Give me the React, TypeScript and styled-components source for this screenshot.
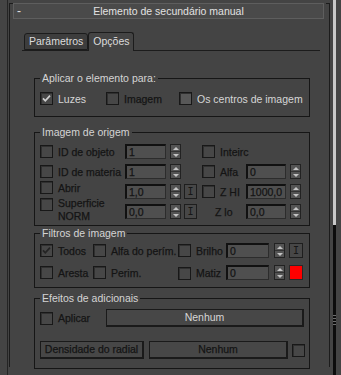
import React from "react";
import styled, { createGlobalStyle } from "styled-components";

const GlobalStyle = createGlobalStyle`
  html, body {
    margin: 0;
    padding: 0;
    background: #444444;
  }
  body {
    font-family: "Liberation Sans", Arial, sans-serif;
    font-size: 10.5px;
  }
`;

const Page = styled.div`
  display: flex;
  width: 341px;
  height: 375px;
  overflow: hidden;
  padding-left: 7px;
  box-sizing: border-box;
  background: #444444;
`;

const Panel = styled.div`
  flex: none;
  width: 326px;
  padding-top: 11px;
  border-left: 1px solid #242424;
  box-sizing: border-box;
`;

const Rollout = styled.div`
  position: relative;
  width: 321px;
  height: 100%;
  margin-left: 1px;
  border-left: 1px solid #1c1c1c;
  border-right: 1px solid #1c1c1c;
  box-sizing: border-box;

  &::before,
  &::after {
    content: "";
    position: absolute;
    top: 0;
    width: 4px;
    height: 1px;
    background: #1c1c1c;
  }
  &::before {
    left: -1px;
  }
  &::after {
    right: -1px;
  }
`;

const Header = styled.div`
  display: grid;
  grid-template-columns: 12px 1fr 12px;
  align-items: center;
  width: 311px;
  height: 16px;
  margin: -8px 0 0 3px;
  border: 1px solid #5e5e5e;
  background: #4a4a4a;
  box-sizing: border-box;
  color: #e2e2e2;
  line-height: 14px;
`;

const Toggle = styled.span`
  padding-left: 3px;
  font-size: 12px;
`;

const Title = styled.span`
  text-align: center;
  white-space: nowrap;
`;

const TabStrip = styled.div`
  display: flex;
  align-items: flex-end;
  width: 296px;
  height: 18px;
  margin: 13px 0 0 12px;
  padding-left: 2px;
  border-bottom: 1px solid #1c1c1c;
`;

const Tab = styled.div<{ $active?: boolean }>`
  height: ${(p) => (p.$active ? 19 : 17)}px;
  margin-bottom: ${(p) => (p.$active ? -1 : 0)}px;
  padding: 0 4px;
  border: 1px solid #1c1c1c;
  border-bottom: ${(p) => (p.$active ? "none" : "1px solid #1c1c1c")};
  border-radius: 3px 3px 0 0;
  background: ${(p) => (p.$active ? "#444444" : "#3d3d3d")};
  box-sizing: border-box;
  color: #dcdcdc;
  line-height: ${(p) => (p.$active ? 17 : 15)}px;
  white-space: nowrap;
`;

const TabPanel = styled.div`
  display: flex;
  flex-direction: column;
  padding: 20px 0 0 24px;
`;

const Group = styled.fieldset<{ $mt: number; $pt: number; $pb: number }>`
  width: 276px;
  min-width: 0;
  margin: ${(p) => p.$mt}px 0 0 0;
  padding: ${(p) => p.$pt}px 5px ${(p) => p.$pb}px 5px;
  border: 1px solid #161616;
  box-sizing: border-box;
`;

const Legend = styled.legend`
  padding: 0 2px;
  color: #d4d4d4;
  line-height: 14px;
  white-space: nowrap;
`;

const Stack = styled.div<{ $gap: number }>`
  display: flex;
  flex-direction: column;
  gap: ${(p) => p.$gap}px;
`;

const Row = styled.div<{ $h?: number }>`
  display: flex;
  align-items: center;
  height: ${(p) => p.$h ?? 15}px;
`;

const Half = styled.div<{ $w?: number }>`
  display: flex;
  align-items: center;
  flex: none;
  width: ${(p) => (p.$w ? `${p.$w}px` : "auto")};
  height: 100%;
`;

const Option = styled.div<{ $w: number; $lift?: number; $top?: boolean; $pl?: number }>`
  display: flex;
  align-items: ${(p) => (p.$top ? "flex-start" : "center")};
  flex: none;
  width: ${(p) => p.$w}px;
  margin-bottom: ${(p) => (p.$lift ?? 0) * 2}px;
  padding-left: ${(p) => p.$pl ?? 0}px;
  box-sizing: border-box;
`;

const dimInk = `
  color: #141414;
  -webkit-text-stroke: 0.25px #141414;
`;

const Text = styled.span<{ $dim?: boolean; $lh?: number }>`
  color: #d6d6d6;
  ${(p) => (p.$dim ? dimInk : "")}
  line-height: ${(p) => p.$lh ?? 14}px;
  white-space: nowrap;
`;

const CheckBox = styled.span<{ $hot?: boolean; $mr?: number; $ml?: number; $mt?: number }>`
  display: flex;
  align-items: center;
  justify-content: center;
  flex: none;
  width: 13px;
  height: 13px;
  margin: ${(p) => p.$mt ?? 0}px ${(p) => p.$mr ?? 5}px 0 ${(p) => p.$ml ?? 0}px;
  border: 1px solid #181818;
  background: ${(p) => (p.$hot ? "#585858" : "#474747")};
  box-shadow: inset 1px 1px 0 #303030;
  box-sizing: border-box;
`;

const Mark = styled.svg`
  width: 11px;
  height: 11px;
`;

const Check = ({
  checked,
  markColor = "#cfcfcf",
  ...rest
}: {
  checked?: boolean;
  markColor?: string;
  hot?: boolean;
  mr?: number;
  ml?: number;
  mt?: number;
}) => (
  <CheckBox $hot={rest.hot} $mr={rest.mr} $ml={rest.ml} $mt={rest.mt}>
    {checked && (
      <Mark viewBox="0 0 11 11">
        <polyline
          points="2,5.3 4.3,7.8 9,2.6"
          fill="none"
          stroke={markColor}
          strokeWidth="1.7"
        />
      </Mark>
    )}
  </CheckBox>
);

const Field = styled.div<{ $w: number }>`
  flex: none;
  width: ${(p) => p.$w}px;
  height: 15px;
  padding-left: 2px;
  border-top: 2px solid #111111;
  border-left: 2px solid #111111;
  border-right: 1px solid #2c2c2c;
  border-bottom: 1px solid #2c2c2c;
  background: #4f4f4f;
  box-sizing: border-box;
  ${dimInk}
  line-height: 12px;
  white-space: nowrap;
`;

const SpinBox = styled.div<{ $ml: number }>`
  display: flex;
  flex-direction: column;
  flex: none;
  width: 11px;
  height: 15px;
  margin-left: ${(p) => p.$ml}px;
  border: 1px solid #222222;
  background: #545454;
  box-sizing: border-box;
`;

const SpinHalf = styled.div<{ $down?: boolean }>`
  display: flex;
  align-items: center;
  justify-content: center;
  flex: 1;
  border-top: ${(p) => (p.$down ? "1px solid #333333" : "none")};
`;

const Arrow = styled.span<{ $down?: boolean }>`
  width: 0;
  height: 0;
  border-left: 3px solid transparent;
  border-right: 3px solid transparent;
  ${(p) =>
    p.$down ? "border-top: 3px solid #c4c4c4;" : "border-bottom: 3px solid #c4c4c4;"}
`;

const Spinner = ({ ml }: { ml: number }) => (
  <SpinBox $ml={ml}>
    <SpinHalf>
      <Arrow />
    </SpinHalf>
    <SpinHalf $down>
      <Arrow $down />
    </SpinHalf>
  </SpinBox>
);

const IButton = styled.div<{ $w: number; $ml: number }>`
  flex: none;
  width: ${(p) => p.$w}px;
  height: 15px;
  margin-left: ${(p) => p.$ml}px;
  border: 1px solid #1e1e1e;
  background: #474747;
  box-sizing: border-box;
  color: #161616;
  font-family: "DejaVu Sans Mono", monospace;
  font-size: 10px;
  line-height: 13px;
  text-align: center;
`;

const Swatch = styled.div<{ $ml: number }>`
  flex: none;
  width: 14px;
  height: 15px;
  margin-left: ${(p) => p.$ml}px;
  border: 1px solid #2a2a2a;
  background: #ff0000;
  box-sizing: border-box;
`;

const Button = styled.div<{ $w: number; $ml?: number; $dim?: boolean }>`
  flex: none;
  width: ${(p) => p.$w}px;
  height: 18px;
  margin-left: ${(p) => p.$ml ?? 0}px;
  border: 1px solid #1a1a1a;
  border-right-width: 2px;
  border-bottom-width: 2px;
  background: #474747;
  box-sizing: border-box;
  color: #d6d6d6;
  ${(p) => (p.$dim ? dimInk : "")}
  line-height: 15px;
  text-align: center;
  white-space: nowrap;
`;

const Scrollbar = styled.div`
  display: flex;
  flex-direction: column;
  flex: none;
  width: 3px;
`;

const Track = styled.div`
  flex: none;
  height: 225px;
  background: #c8c8c8;
`;

const Thumb = styled.div`
  display: flex;
  align-items: center;
  flex: none;
  height: 190px;
  background: #0c0c0c;
`;

const Grip = styled.div`
  width: 100%;
  height: 10px;
  background: repeating-linear-gradient(#6e6e6e 0 1px, transparent 1px 3px);
`;

export default function App() {
  return (
    <>
      <GlobalStyle />
      <Page>
        <Panel>
          <Rollout>
            <Header>
              <Toggle>-</Toggle>
              <Title>Elemento de secundário manual</Title>
            </Header>

            <TabStrip>
              <Tab>Parâmetros</Tab>
              <Tab $active>Opções</Tab>
            </TabStrip>

            <TabPanel>
              <Group $mt={0} $pt={6} $pb={10}>
                <Legend>Aplicar o elemento para:</Legend>
                <Row>
                  <Option $w={66}>
                    <Check checked />
                    <Text>Luzes</Text>
                  </Option>
                  <Option $w={73}>
                    <Check />
                    <Text $dim>Imagem</Text>
                  </Option>
                  <Option $w={125}>
                    <Check hot />
                    <Text>Os centros de imagem</Text>
                  </Option>
                </Row>
              </Group>

              <Group $mt={8} $pt={5} $pb={6}>
                <Legend>Imagem de origem</Legend>
                <Stack $gap={5}>
                  <Row>
                    <Half $w={162}>
                      <Option $w={85}>
                        <Check />
                        <Text $dim>ID de objeto</Text>
                      </Option>
                      <Field $w={41}>1</Field>
                      <Spinner ml={4} />
                    </Half>
                    <Half>
                      <Option $w={44}>
                        <Check />
                        <Text $dim>Inteirc</Text>
                      </Option>
                    </Half>
                  </Row>
                  <Row>
                    <Half $w={162}>
                      <Option $w={85}>
                        <Check />
                        <Text $dim>ID de materia</Text>
                      </Option>
                      <Field $w={41}>1</Field>
                      <Spinner ml={4} />
                    </Half>
                    <Half>
                      <Option $w={44}>
                        <Check />
                        <Text $dim>Alfa</Text>
                      </Option>
                      <Field $w={40}>0</Field>
                      <Spinner ml={4} />
                    </Half>
                  </Row>
                  <Row>
                    <Half $w={162}>
                      <Option $w={85} $lift={4}>
                        <Check />
                        <Text $dim>Abrir</Text>
                      </Option>
                      <Field $w={41}>1,0</Field>
                      <Spinner ml={4} />
                      <IButton $w={13} $ml={3}>I</IButton>
                    </Half>
                    <Half>
                      <Option $w={44}>
                        <Check />
                        <Text $dim>Z HI</Text>
                      </Option>
                      <Field $w={40}>1000,0</Field>
                      <Spinner ml={4} />
                    </Half>
                  </Row>
                  <Row>
                    <Half $w={162}>
                      <Option $w={85} $top $lift={2}>
                        <Check mt={1} />
                        <Text $dim $lh={13}>
                          Superficie
                          <br />
                          NORM
                        </Text>
                      </Option>
                      <Field $w={41}>0,0</Field>
                      <Spinner ml={4} />
                      <IButton $w={13} $ml={3}>I</IButton>
                    </Half>
                    <Half>
                      <Option $w={44} $pl={13}>
                        <Text $dim>Z lo</Text>
                      </Option>
                      <Field $w={40}>0,0</Field>
                      <Spinner ml={4} />
                    </Half>
                  </Row>
                </Stack>
              </Group>

              <Group $mt={0} $pt={3} $pb={7}>
                <Legend>Filtros de imagem</Legend>
                <Stack $gap={7}>
                  <Row>
                    <Option $w={53}>
                      <Check checked markColor="#242424" />
                      <Text $dim>Todos</Text>
                    </Option>
                    <Option $w={85}>
                      <Check />
                      <Text $dim>Alfa do perím.</Text>
                    </Option>
                    <Option $w={48}>
                      <Check />
                      <Text $dim>Brilho</Text>
                    </Option>
                    <Field $w={43}>0</Field>
                    <Spinner ml={5} />
                    <IButton $w={14} $ml={4}>I</IButton>
                  </Row>
                  <Row>
                    <Option $w={53}>
                      <Check />
                      <Text $dim>Aresta</Text>
                    </Option>
                    <Option $w={85}>
                      <Check />
                      <Text $dim>Perim.</Text>
                    </Option>
                    <Option $w={48}>
                      <Check mt={2} />
                      <Text $dim>Matiz</Text>
                    </Option>
                    <Field $w={43}>0</Field>
                    <Spinner ml={5} />
                    <Swatch $ml={4} />
                  </Row>
                </Stack>
              </Group>

              <Group $mt={3} $pt={4} $pb={9}>
                <Legend>Efeitos de adicionais</Legend>
                <Stack $gap={14}>
                  <Row $h={18}>
                    <Option $w={66}>
                      <Check />
                      <Text $dim>Aplicar</Text>
                    </Option>
                    <Button $w={198}>Nenhum</Button>
                  </Row>
                  <Row $h={18}>
                    <Button $w={104} $dim>
                      Densidade do radial
                    </Button>
                    <Button $w={139} $ml={5} $dim>
                      Nenhum
                    </Button>
                    <Check ml={4} mr={0} />
                  </Row>
                </Stack>
              </Group>
            </TabPanel>
          </Rollout>
        </Panel>

        <Scrollbar>
          <Track />
          <Thumb>
            <Grip />
          </Thumb>
        </Scrollbar>
      </Page>
    </>
  );
}
